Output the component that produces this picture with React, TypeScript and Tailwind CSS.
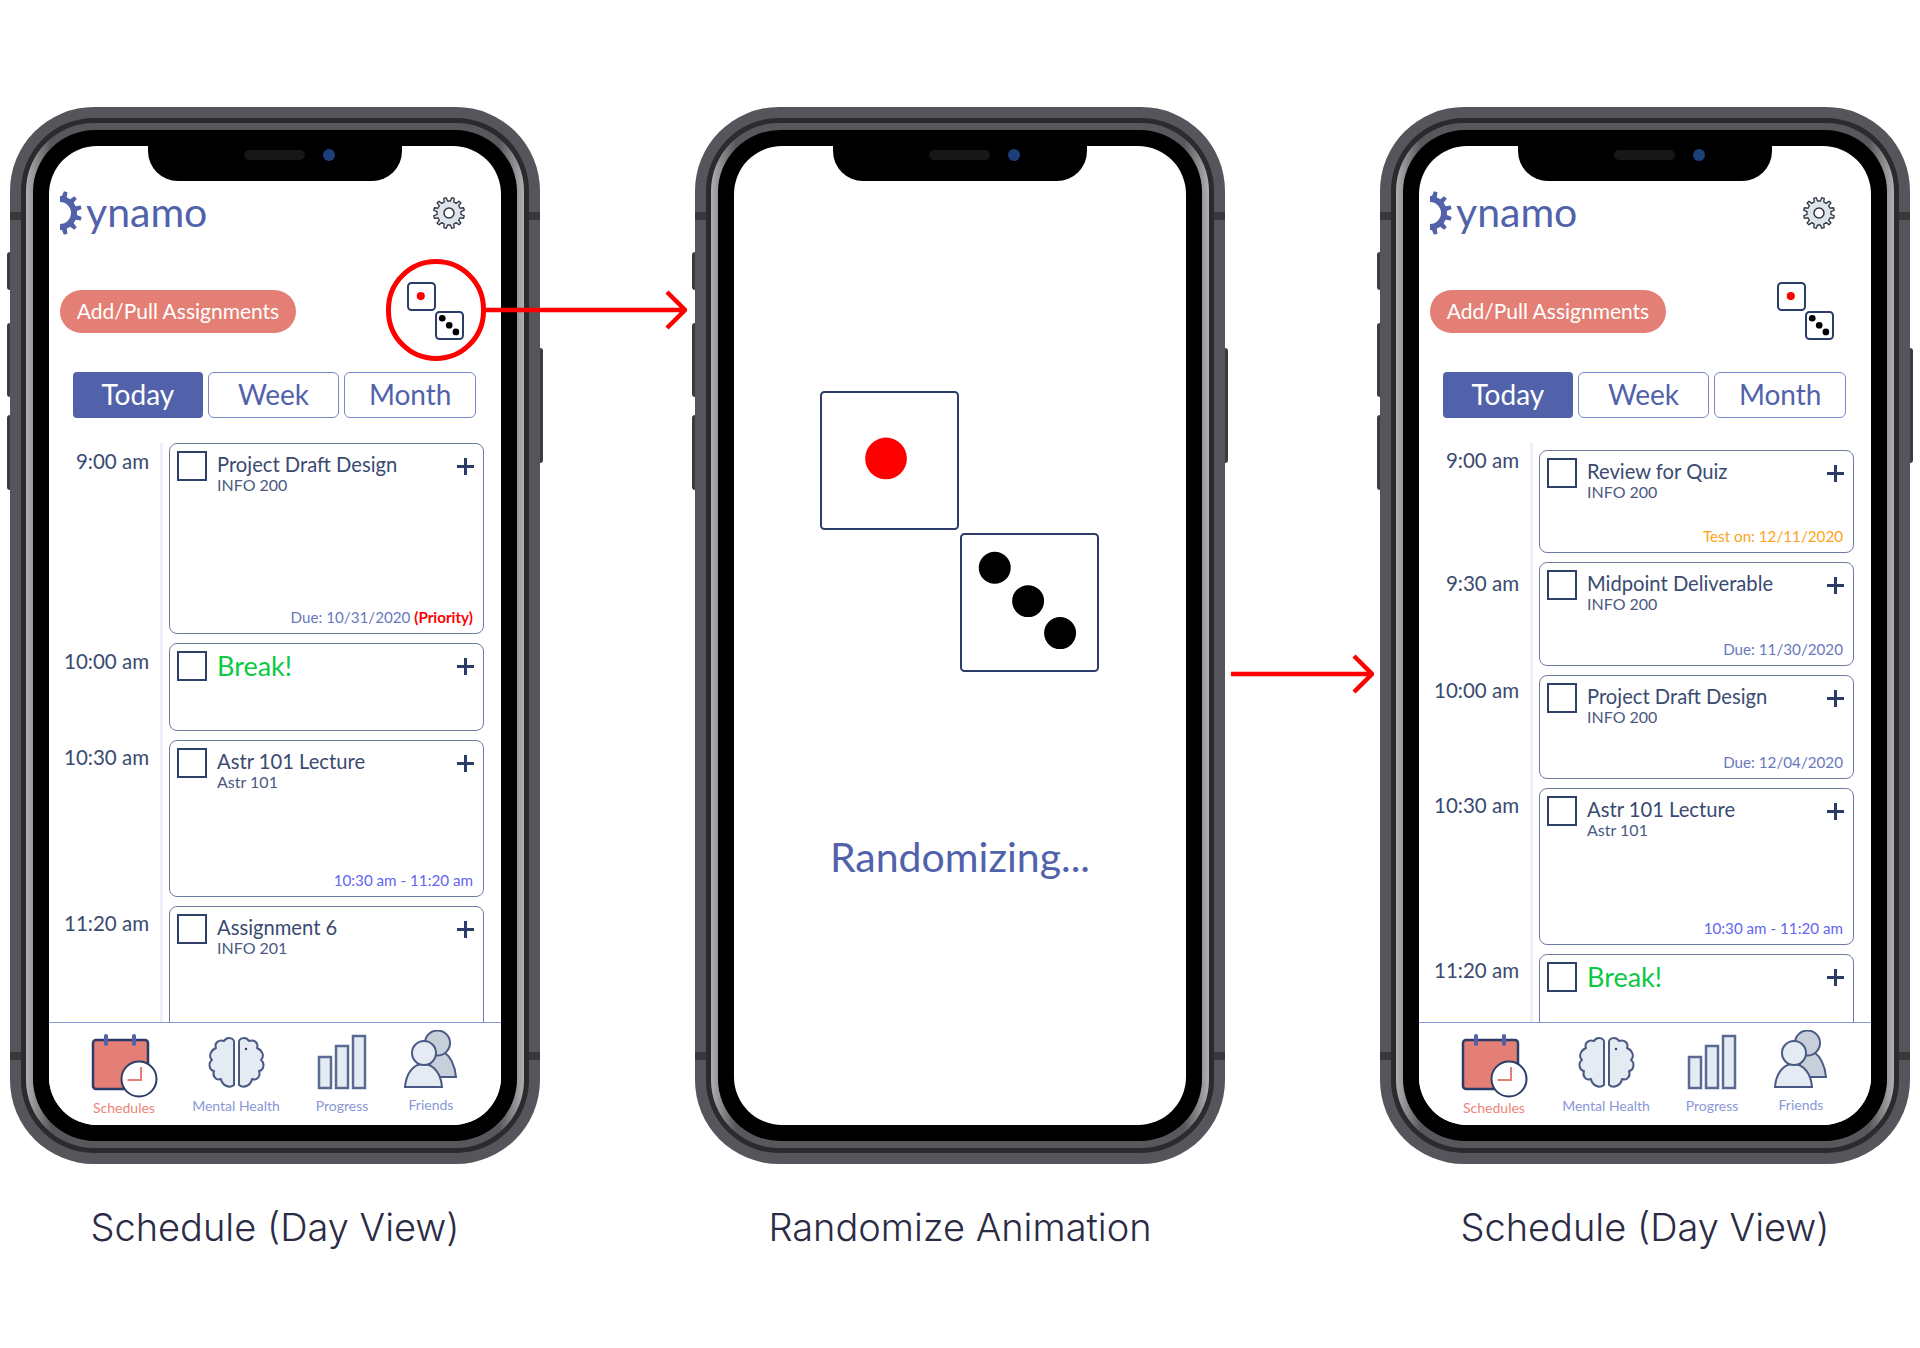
import { ReactNode } from 'react'

const uiFont = "font-['Lato','Noto_Sans',sans-serif]"

type Item = {
  time: string
  timeClass: string
  rowClass?: string
  cardClass: string
  title: string
  sub?: string
  foot?: ReactNode
  footClass?: string
  isBreak?: boolean
}

const dayOne: Item[] = [
  {
    time: '9:00 am',
    timeClass: 'pt-[6px]',
    cardClass: 'h-[191px]',
    title: 'Project Draft Design',
    sub: 'INFO 200',
    foot: (
      <>
        Due: 10/31/2020 <span className="font-bold text-[#ff0000]">(Priority)</span>
      </>
    ),
  },
  { time: '10:00 am', timeClass: 'pt-[6px]', cardClass: 'h-[88px]', title: 'Break!', isBreak: true },
  {
    time: '10:30 am',
    timeClass: 'pt-[5px]',
    cardClass: 'h-[157px]',
    title: 'Astr 101 Lecture',
    sub: 'Astr 101',
    foot: '10:30 am - 11:20 am',
    footClass: 'text-[#6366f1]',
  },
  { time: '11:20 am', timeClass: 'pt-[5px]', cardClass: 'h-[160px]', title: 'Assignment 6', sub: 'INFO 201' },
]

const dayTwo: Item[] = [
  {
    time: '9:00 am',
    timeClass: 'pt-[5px]',
    rowClass: 'pt-[7px]',
    cardClass: 'h-[103px]',
    title: 'Review for Quiz',
    sub: 'INFO 200',
    foot: 'Test on: 12/11/2020',
    footClass: 'text-[#fba31c]',
  },
  {
    time: '9:30 am',
    timeClass: 'pt-[9px]',
    cardClass: 'h-[104px]',
    title: 'Midpoint Deliverable',
    sub: 'INFO 200',
    foot: 'Due: 11/30/2020',
  },
  {
    time: '10:00 am',
    timeClass: 'pt-[3px]',
    cardClass: 'h-[104px]',
    title: 'Project Draft Design',
    sub: 'INFO 200',
    foot: 'Due: 12/04/2020',
  },
  {
    time: '10:30 am',
    timeClass: 'pt-[5px]',
    cardClass: 'h-[157px]',
    title: 'Astr 101 Lecture',
    sub: 'Astr 101',
    foot: '10:30 am - 11:20 am',
    footClass: 'text-[#6366f1]',
  },
  { time: '11:20 am', timeClass: 'pt-[4px]', cardClass: 'h-[100px]', title: 'Break!', isBreak: true },
]

// teeth running round an arc, angles in degrees
function teethPoints(cx: number, cy: number, rOut: number, rIn: number, teeth: number, from: number, to: number) {
  const step = (to - from) / teeth
  const pts: string[] = []
  const at = (r: number, a: number) => {
    const rad = (a * Math.PI) / 180
    return `${(cx + r * Math.cos(rad)).toFixed(2)} ${(cy + r * Math.sin(rad)).toFixed(2)}`
  }
  for (let i = 0; i < teeth; i++) {
    const a = from + i * step
    pts.push(at(rIn, a), at(rIn, a + step * 0.22), at(rOut, a + step * 0.34), at(rOut, a + step * 0.66), at(rIn, a + step * 0.78))
  }
  pts.push(at(rIn, to))
  return pts
}

function LogoGear() {
  const pts = teethPoints(0, 22, 22, 17, 6, -90, 90)
  const d = `M${pts.join(' L')} L0 33 A11 11 0 0 0 0 11 Z`
  return (
    <svg width="25" height="45" viewBox="0 0 25 45" className="shrink-0">
      <path d={d} fill="#5162ab" />
    </svg>
  )
}

function SettingsGear() {
  const pts = teethPoints(16, 16, 15.5, 12, 12, 0, 360)
  return (
    <svg width="32" height="32" viewBox="0 0 32 32">
      <path d={`M${pts.join(' L')} Z`} fill="#dde4ea" stroke="#2f3542" strokeWidth="1.3" strokeLinejoin="round" />
      <circle cx="16" cy="16" r="5" fill="#fff" stroke="#2f3542" strokeWidth="1.5" />
    </svg>
  )
}

function Die({ size, dots, color, r }: { size: number; dots: number[][]; color: string; r: number }) {
  return (
    <svg width={size} height={size} viewBox={`0 0 ${size} ${size}`} className="block">
      <rect x="1" y="1" width={size - 2} height={size - 2} rx="3.5" fill="#fff" stroke="#2b3c68" strokeWidth="2" />
      {dots.map(([x, y]) => (
        <circle key={x} cx={x * size} cy={y * size} r={r * size} fill={color} />
      ))}
    </svg>
  )
}

const oneDot = [[0.475, 0.485]]
const threeDots = [
  [0.25, 0.25],
  [0.49, 0.49],
  [0.72, 0.72],
]

function CalendarIcon() {
  return (
    <svg width="70" height="70" viewBox="0 0 70 70">
      <rect x="4" y="10" width="55" height="49" rx="3" fill="#e37f75" stroke="#2b3c68" strokeWidth="2.5" />
      <rect x="15" y="4" width="4" height="12" rx="2" fill="#5162ab" />
      <rect x="43" y="4" width="4" height="12" rx="2" fill="#5162ab" />
      <circle cx="50" cy="49" r="17.5" fill="#fff" stroke="#2b3c68" strokeWidth="2" />
      <path d="M52 37 V50 H38.5" fill="none" stroke="#e37f75" strokeWidth="2" />
    </svg>
  )
}

function BrainIcon() {
  const left =
    'M33 12 C33 8 26 6 23 11 C18 9 13 13 15 18 C10 20 7 26 11 30 C7 33 8 40 13 41 C11 46 15 51 20 49 C21 55 28 59 33 55 Z'
  return (
    <svg width="70" height="70" viewBox="0 0 70 70">
      <path d={left} fill="#e4ebf2" stroke="#4a5a85" strokeWidth="2" strokeLinejoin="round" />
      <path d={left} transform="translate(71 0) scale(-1 1)" fill="#e4ebf2" stroke="#4a5a85" strokeWidth="2" strokeLinejoin="round" />
      <circle cx="45" cy="19" r="1.2" fill="#2b3c68" />
    </svg>
  )
}

function BarsIcon() {
  return (
    <svg width="70" height="70" viewBox="0 0 70 70">
      <g fill="#e4ebf2" stroke="#5a6a92" strokeWidth="2.5">
        <rect x="12" y="27" width="12" height="31" />
        <rect x="29" y="16" width="12" height="42" />
        <rect x="46" y="6" width="12" height="52" />
      </g>
    </svg>
  )
}

function FriendsIcon() {
  return (
    <svg width="70" height="70" viewBox="0 0 70 70">
      <g stroke="#4a5a85" strokeWidth="2" fill="#c7d0da">
        <path d="M34 47 V22 H48 C55 27 59 37 60 47 Z" />
        <circle cx="41.5" cy="13" r="12.5" />
      </g>
      <g stroke="#4a5a85" strokeWidth="2" fill="#e4ebf2">
        <path d="M9 57 C10 44 17 34 27 34 C38 34 45 44 46 57 Z" />
        <circle cx="28" cy="23" r="12" />
      </g>
    </svg>
  )
}

function TabBar() {
  return (
    <div className={`flex h-[103px] shrink-0 border-t border-[#8a97d6] bg-white pt-[7px] text-[14px] ${uiFont}`}>
      <div className="ml-[40px] flex w-[70px] flex-col items-center">
        <CalendarIcon />
        <span className="whitespace-nowrap leading-4 text-[#ee8379]">Schedules</span>
      </div>
      <div className="ml-[42px] flex w-[70px] flex-col items-center">
        <BrainIcon />
        <span className="-mt-[2px] whitespace-nowrap leading-4 text-[#8a97d6]">Mental Health</span>
      </div>
      <div className="ml-[36px] flex w-[70px] flex-col items-center">
        <BarsIcon />
        <span className="-mt-[2px] whitespace-nowrap leading-4 text-[#8a97d6]">Progress</span>
      </div>
      <div className="ml-[19px] flex w-[70px] flex-col items-center">
        <FriendsIcon />
        <span className="-mt-[3px] whitespace-nowrap leading-4 text-[#8a97d6]">Friends</span>
      </div>
    </div>
  )
}

function Row({ item }: { item: Item }) {
  return (
    <div className="flex">
      <div className={`w-[100px] shrink-0 text-right text-[20.5px] leading-6 text-[#3a4a70] ${item.timeClass}`}>{item.time}</div>
      <div className={`ml-[11px] flex-1 border-l-[3px] border-[#eeeffa] pb-[9px] pl-[6px] ${item.rowClass ?? ''}`}>
        <div className={`flex flex-col justify-between rounded-lg border-[1.5px] border-[#6f7ca0] ${item.cardClass}`}>
          <div className="flex items-start pl-[7px] pt-[7px] pr-[9px]">
            <div className="h-[30px] w-[30px] shrink-0 border-2 border-[#2f4068]" />
            <div className="ml-[10px] flex-1 pt-[1px]">
              {item.isBreak ? (
                <p className="text-[27px] leading-[28px] text-[#0bc943]">{item.title}</p>
              ) : (
                <>
                  <p className="text-[20.2px] leading-6 text-[#3a4a70]">{item.title}</p>
                  <p className="text-[16px] leading-[17px] text-[#4a5a80]">{item.sub}</p>
                </>
              )}
            </div>
            <svg width="17" height="17" viewBox="0 0 17 17" className="mt-[7px] shrink-0">
              <path d="M8.5 0 V17 M0 8.5 H17" stroke="#2b3c68" strokeWidth="3" />
            </svg>
          </div>
          {item.foot && (
            <p className={`pb-[7px] pr-[10px] text-right text-[15.2px] leading-[18px] ${item.footClass ?? 'text-[#6a78bc]'}`}>{item.foot}</p>
          )}
        </div>
      </div>
    </div>
  )
}

function ScheduleScreen({ items }: { items: Item[] }) {
  return (
    <div className={`flex h-full flex-col ${uiFont}`}>
      <div className="flex h-[100px] shrink-0 items-center pl-[11px] pr-[36px] pt-[34px]">
        <LogoGear />
        <span className="ml-[1px] mb-[3px] text-[41px] leading-none text-[#5162ab]">ynamo</span>
        <div className="ml-auto">
          <SettingsGear />
        </div>
      </div>
      <div className="mt-[37px] flex h-[57px] shrink-0 items-center pl-[11px] pr-[37px]">
        <button className="flex h-[43px] w-[236px] items-center justify-center rounded-full bg-[#e37f75] pb-[1px] text-[21px] text-white">
          Add/Pull Assignments
        </button>
        <div className="ml-auto -mt-[1px] flex flex-col">
          <Die size={29} dots={oneDot} color="#ff0000" r={0.14} />
          <div className="ml-[28px]">
            <Die size={29} dots={threeDots} color="#000000" r={0.115} />
          </div>
        </div>
      </div>
      <div className="mt-[32px] flex h-[46px] shrink-0 gap-[5px] pl-[24px] pr-[25px] text-[28px]">
        <div className="flex flex-1 items-center justify-center rounded-[4px] bg-[#5162ab] pb-[2px] text-white">Today</div>
        <div className="flex flex-1 items-center justify-center rounded-[6px] border border-[#7a88c8] pb-[2px] text-[#5162ab]">Week</div>
        <div className="flex flex-1 items-center justify-center rounded-[6px] border border-[#7a88c8] pb-[2px] text-[#5162ab]">Month</div>
      </div>
      <div className="mt-[25px] min-h-0 flex-1 overflow-hidden pr-[17px]">
        {items.map((item) => (
          <Row key={item.time} item={item} />
        ))}
      </div>
      <TabBar />
    </div>
  )
}

function RandomizeScreen() {
  return (
    <div className={`flex h-full flex-col pt-[245px] ${uiFont}`}>
      <div className="ml-[86px]">
        <Die size={139} dots={oneDot} color="#ff0000" r={0.15} />
      </div>
      <div className="ml-[226px] mt-[3px]">
        <Die size={139} dots={threeDots} color="#000000" r={0.115} />
      </div>
      <p className="mt-[160px] text-center text-[41px] leading-[50px] text-[#5162ab]">Randomizing...</p>
    </div>
  )
}

function Phone({ children, caption }: { children: ReactNode; caption: string }) {
  return (
    <div className="w-[530px] shrink-0">
      <div className="relative h-[1057px] w-full rounded-[84px] bg-[#55555b] p-[11px]">
        <div className="absolute -left-[3px] top-[145px] h-[38px] w-[3px] rounded-l-sm bg-[#3c3c40]" />
        <div className="absolute -left-[3px] top-[216px] h-[74px] w-[3px] rounded-l-sm bg-[#3c3c40]" />
        <div className="absolute -left-[3px] top-[308px] h-[75px] w-[3px] rounded-l-sm bg-[#3c3c40]" />
        <div className="absolute -right-[3px] top-[241px] h-[115px] w-[3px] rounded-r-sm bg-[#3c3c40]" />
        <div className="absolute left-0 top-[105px] h-[8px] w-[11px] bg-[#38383c]" />
        <div className="absolute right-0 top-[105px] h-[8px] w-[11px] bg-[#38383c]" />
        <div className="absolute bottom-[104px] left-0 h-[8px] w-[11px] bg-[#38383c]" />
        <div className="absolute bottom-[104px] right-0 h-[8px] w-[11px] bg-[#38383c]" />
        <div className="h-full rounded-[73px] bg-[#2b2b2d] p-[5px]">
          <div className="h-full rounded-[68px] bg-[linear-gradient(to_right,#b0b0b2_0%,#58585c_5%,#58585c_95%,#b0b0b2_100%)] p-[7px]">
            <div className="h-full rounded-[62px] bg-black p-[16px]">
              <div className="relative h-full overflow-hidden rounded-[48px] bg-white">
                {children}
                <div className="absolute left-1/2 top-0 flex h-[35px] w-[254px] -translate-x-1/2 items-center justify-center gap-[18px] rounded-b-[30px] bg-black pb-[18px] pl-[29px]">
                  <div className="h-[10px] w-[61px] rounded-full bg-[#171717]" />
                  <div className="h-[12px] w-[12px] rounded-full bg-[#1c3f7a]" />
                </div>
              </div>
            </div>
          </div>
        </div>
      </div>
      <p className="mt-[41px] text-center font-['Inter',sans-serif] text-[38px] font-light leading-[44px] text-[#2b2b45]">{caption}</p>
    </div>
  )
}

function Arrow({ className, width }: { className: string; width: number }) {
  return (
    <svg width={width} height="40" viewBox={`0 0 ${width} 40`} className={className}>
      <path d={`M0 20 H${width - 2} M${width - 20} 2 L${width - 2} 20 L${width - 20} 38`} fill="none" stroke="#ff0000" strokeWidth="4.5" />
    </svg>
  )
}

export default function App() {
  return (
    <div className="relative h-[1348px] w-[1920px] overflow-hidden bg-white">
      <div className="flex gap-[155px] pl-[10px] pt-[107px]">
        <Phone caption="Schedule (Day View)">
          <ScheduleScreen items={dayOne} />
        </Phone>
        <Phone caption="Randomize Animation">
          <RandomizeScreen />
        </Phone>
        <Phone caption="Schedule (Day View)">
          <ScheduleScreen items={dayTwo} />
        </Phone>
      </div>
      <div className="absolute left-[386px] top-[259px] h-[102px] w-[100px] rounded-full border-[5px] border-[#ff0000]" />
      <Arrow className="absolute left-[486px] top-[290px]" width={201} />
      <Arrow className="absolute left-[1231px] top-[654px]" width={143} />
    </div>
  )
}
